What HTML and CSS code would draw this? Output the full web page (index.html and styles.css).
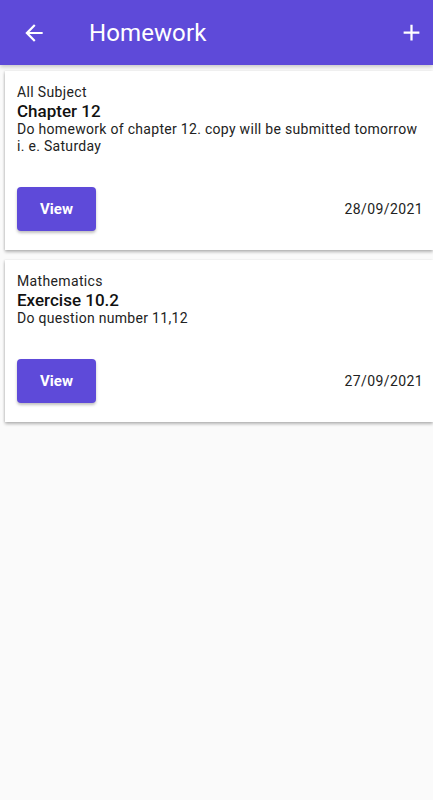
FILE: index.html
```html
<!DOCTYPE html>
<html lang="en">
<head>
  <meta charset="UTF-8" />
  <title>Homework</title>
  <link rel="stylesheet" href="styles.css">
</head>
<body>
  <header class="appbar">
    <svg class="icon" viewBox="0 0 24 24" width="26" height="26">
      <path d="M20 11H7.83l5.59-5.59L12 4l-8 8 8 8 1.41-1.41L7.83 13H20v-2z" fill="#fff"/>
    </svg>
    <h1 class="title">Homework</h1>
    <svg class="icon add" viewBox="0 0 24 24" width="27" height="27">
      <path d="M19 13h-6v6h-2v-6H5v-2h6V5h2v6h6v2z" fill="#fff"/>
    </svg>
  </header>

  <main class="list">
    <div class="card">
      <div class="subject">All Subject</div>
      <div class="topic">Chapter 12</div>
      <div class="desc">Do homework of chapter 12. copy will be submitted tomorrow i. e. Saturday</div>
      <div class="card-foot">
        <button class="view-btn">View</button>
        <span class="date">28/09/2021</span>
      </div>
    </div>

    <div class="card">
      <div class="subject">Mathematics</div>
      <div class="topic">Exercise 10.2</div>
      <div class="desc">Do question number 11,12</div>
      <div class="card-foot">
        <button class="view-btn">View</button>
        <span class="date">27/09/2021</span>
      </div>
    </div>
  </main>
</body>
</html>
```

FILE: styles.css
```css
body {
  margin: 0;
  background-color: #fafafa;
  font-family: Roboto, "Noto Sans", sans-serif;
  color: #1d1d1d;
}
.appbar {
  height: 65px;
  background-color: #5e4ad9;
  display: flex;
  align-items: center;
  padding: 0 8px 0 21px;
  box-shadow: 0 2px 4px rgba(0, 0, 0, 0.2);
}
.icon {
  display: block;
  flex: none;
}
.title {
  flex: 1;
  margin: 0 0 0 42px;
  font-size: 24px;
  font-weight: 400;
  letter-spacing: 0.1px;
  color: #fff;
}
.list {
  padding-top: 6px;
}
.card {
  background: #fff;
  margin: 0 0 10px 5px;
  padding: 12px 10px 19px 12px;
  box-shadow: 0 2px 3px rgba(0, 0, 0, 0.28), -1px 0 2px rgba(0, 0, 0, 0.08);
}
.subject {
  font-size: 14px;
  line-height: 18px;
  letter-spacing: 0.35px;
  color: #222;
}
.topic {
  font-size: 17px;
  line-height: 20px;
  font-weight: 500;
  color: #111;
}
.desc {
  font-size: 14px;
  line-height: 17px;
  letter-spacing: 0.3px;
  color: #222;
}
.card-foot {
  margin-top: 32px;
  display: flex;
  align-items: center;
  justify-content: space-between;
}
.view-btn {
  width: 79px;
  height: 44px;
  border: none;
  border-radius: 4px;
  background-color: #5e4ad9;
  color: #fff;
  font-family: Roboto, sans-serif;
  font-size: 15px;
  font-weight: 700;
  box-shadow: 0 2px 3px rgba(0, 0, 0, 0.25);
}
.date {
  font-size: 14px;
  letter-spacing: 0.4px;
  color: #222;
}
```
